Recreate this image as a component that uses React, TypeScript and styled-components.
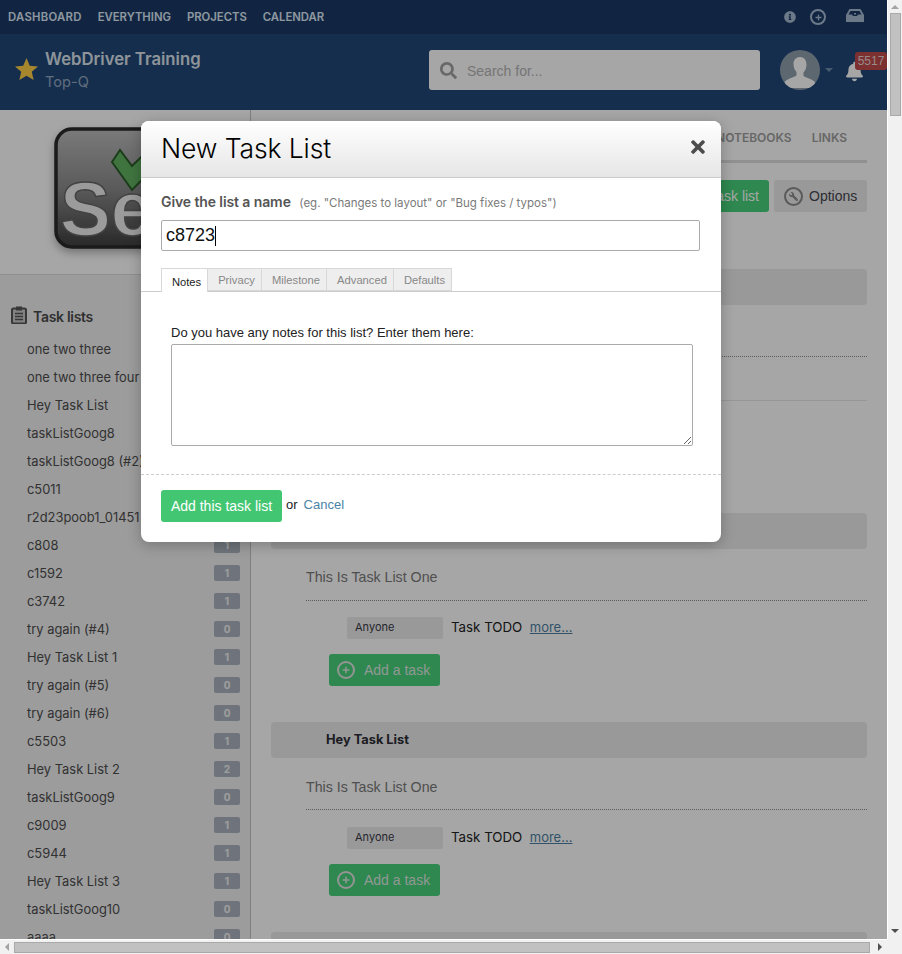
import React from "react";
import styled, { createGlobalStyle } from "styled-components";
import { FaBell, FaInfoCircle, FaSearch, FaTimes, FaWrench, FaPlus } from "react-icons/fa";

const PROXIMA = `"Inter", "Open Sans", sans-serif`;
const ARIAL = `"Liberation Sans", Arial, sans-serif`;

const Global = createGlobalStyle`
  html, body { margin: 0; padding: 0; height: 100%; overflow: hidden; background: #f1f1f1; }
  * { box-sizing: border-box; }
`;

const Viewport = styled.div`
  width: 902px; height: 954px;
  display: grid;
  grid-template-columns: 887px 15px;
  grid-template-rows: 939px 15px;
  overflow: hidden;
`;
const Page = styled.div`
  position: relative;
  overflow: hidden;
  background: #fff;
  font-family: ${PROXIMA};
`;

/* Header */
const TopBar = styled.div`
  height: 34px; background: #1b3a67;
  display: flex; align-items: center; padding: 0 8px;
  gap: 16px;
`;
const NavLink = styled.a`
  font-size: 11.3px; font-weight: 600; color: #dde8f5;
  &:first-child { letter-spacing: 0.3px; }
`;
const NavIcons = styled.div`
  margin-left: auto; display: flex; align-items: center; color: #a6bad2; padding-right: 15px;
`;
const InfoIcon = styled(FaInfoCircle)` width: 12px; height: 12px; margin-right: 14px; `;
const PlusRing = styled.span`
  width: 16px; height: 16px; border: 2px solid #a6bad2; border-radius: 50%;
  display: flex; align-items: center; justify-content: center; margin-right: 20px;
`;
const PlusGlyph = styled(FaPlus)<{ $size: number }>` width: ${p => p.$size}px; height: ${p => p.$size}px; `;
const TrayIcon = styled.svg` width: 18px; height: 13px; margin-top: -3px; `;

const ProjectBar = styled.div`
  height: 76px; background: #214879;
  display: flex; align-items: flex-start; position: relative; padding-top: 16px;
`;
const StarIcon = styled.svg`
  width: 23px; height: 22px; margin: 8px 7px 0 15px; flex: none;
`;
const ProjectNames = styled.div` width: 384px; display: flex; flex-direction: column; margin-top: -2px; `;
const ProjectTitle = styled.div` font-size: 16.7px; font-weight: 600; color: #dbe3ec; line-height: 22px; `;
const ProjectSub = styled.div` font-size: 14.6px; color: #94a8c2; line-height: 22px; margin-top: 1px; `;
const SearchBox = styled.div`
  width: 331px; height: 40px; background: #fff; border-radius: 3px;
  display: flex; align-items: center; padding: 1px 0 0 11px; gap: 10px;
  font-size: 14px; font-family: ${ARIAL}; color: #b5b5b5;
`;
const SearchIcon = styled(FaSearch)` width: 17px; height: 17px; color: #a0a0a0; margin-top: -1px; `;
const Avatar = styled.svg` width: 40px; height: 40px; margin-left: 20px; `;
const Caret = styled.span`
  width: 0; height: 0; margin: 18px 0 0 5px;
  border-left: 4px solid transparent; border-right: 4px solid transparent; border-top: 4px solid #6f8cae;
`;
const BellIcon = styled(FaBell)` width: 17px; height: 23px; color: #fff; position: absolute; left: 846px; top: 26px; `;
const AlertBadge = styled.span`
  position: absolute; left: 855px; top: 18px; width: 32px; height: 18px;
  background: #c04a4a; color: #e8d5d5; border-radius: 3px;
  font: 12px/18px ${ARIAL}; text-align: center;
`;

/* Body */
const Body = styled.div` display: flex; height: 829px; overflow: hidden; `;
const Sidebar = styled.aside`
  width: 251px; flex: none; background: #f0f0f0; border-right: 1px solid #c4c4c4;
  height: 829px; overflow: hidden;
`;
const LogoPanel = styled.div`
  height: 165px; background: #fff; border-bottom: 1px solid #dcdcdc; padding: 16px 0 0 53px;
`;
const ListsHeading = styled.h3`
  display: flex; align-items: center; gap: 6px; margin: 30px 0 8px 11px;
  font-size: 14px; font-weight: 600; color: #4a4a4a; letter-spacing: -0.3px; height: 22px;
`;
const ClipIcon = styled.svg` width: 16px; height: 18px; margin-top: -3px; `;
const ListRow = styled.div`
  height: 28px; display: flex; align-items: center; justify-content: space-between;
  padding: 0 10px 0 27px;
  font-size: 12.9px; color: #4d4d4d;
  white-space: nowrap;
`;
const CountBadge = styled.span`
  width: 26px; height: 16px; border-radius: 2px; background: #abb3bf; color: #f3f3f3;
  font-size: 10px; font-weight: 700; text-align: center; line-height: 16px;
`;

const Main = styled.main` flex: 1; padding: 0 20px; min-width: 0; `;
const Tabs = styled.div`
  height: 53px; border-bottom: 3px solid #ddd;
  display: flex; justify-content: flex-end; align-items: center; padding: 4px 20px 0 0; gap: 20px;
`;
const TabLink = styled.a` font-size: 12px; font-weight: 600; color: #9e9e9e; `;
const Actions = styled.div` display: flex; justify-content: flex-end; gap: 5px; margin-top: 17px; height: 32px; `;
const GreenButton = styled.a`
  height: 32px; background: #47d27a; color: #fff; border-radius: 3px;
  display: inline-flex; align-items: center; font: 14px ${ARIAL};
`;
const NewListButton = styled(GreenButton)` padding: 0 10px; `;
const OptionsButton = styled.a`
  width: 93px; height: 32px; background: #ebebeb; border-radius: 3px;
  display: flex; align-items: center; padding-left: 10px; gap: 6px;
  font: 14px ${ARIAL}; color: #464650;
`;
const WrenchRing = styled.span`
  width: 19px; height: 19px; border: 2.5px solid #8a8a8a; border-radius: 50%;
  display: flex; align-items: center; justify-content: center; color: #8a8a8a;
`;
const WrenchIcon = styled(FaWrench)` width: 9px; height: 9px; transform: scaleX(-1); `;
const Section = styled.section` &:first-of-type { margin-top: 57px; } margin-bottom: 36px; `;
const SectionHead = styled.div`
  height: 36px; background: #ebebeb; border-radius: 4px; padding: 0 0 2px 55px;
  display: flex; align-items: center; font-size: 12.8px; font-weight: 700; color: #2c2c34;
`;
const SectionDesc = styled.div`
  margin-left: 35px; height: 52px; border-bottom: 1px dotted #8c8c8c; padding-top: 18.2px;
  font: 14.2px/20px ${ARIAL}; color: #7a7a7a;
`;
const TaskRow = styled.div<{ $ruled?: boolean }>`
  margin: 16.2px 0 0 76px; height: 22px; display: flex; align-items: center; position: relative;
  ${p => p.$ruled ? `& + & { margin-top: 13px; } & + &::before { content: ""; position: absolute; left: -41px; right: 0; top: -8px; border-top: 1px solid #e6e6e6; }` : ""}
`;
const Assignee = styled.span`
  width: 96px; height: 22px; background: #ebebeb; border-radius: 2px; padding-left: 8px;
  font-size: 11px; line-height: 21px; color: #3a3a48; margin-right: 8px;
`;
const TaskName = styled.span` font-size: 13.3px; font-weight: 400; color: #222; margin: 0 7.5px 2px 0; `;
const MoreLink = styled.a` font-size: 13px; color: #4d7fa3; text-decoration: underline; margin-bottom: 2px; `;
const AddTask = styled(GreenButton)`
  margin: 15px 0 0 58px; width: 111px; padding-left: 8px; gap: 9px; color: #dfe9e2;
`;
const PlusRingLight = styled.span`
  width: 18px; height: 18px; border: 2px solid #e4e4e4; border-radius: 50%;
  display: flex; align-items: center; justify-content: center;
`;

/* Overlay + modal */
const Dim = styled.div` position: absolute; inset: 0; background: rgba(0,0,0,.35); `;
const Modal = styled.div`
  position: absolute; left: 141px; top: 121px; width: 580px; height: 421px;
  background: #fff; border-radius: 8px; overflow: hidden;
  box-shadow: 0 3px 14px rgba(0,0,0,.25);
  font-family: ${ARIAL};
`;
const ModalHead = styled.div`
  height: 57px; background: linear-gradient(#fff, #e6e6e6);
  border-bottom: 1px solid #ccc;
  display: flex; align-items: center; justify-content: space-between; padding: 0 14px 2px 20px;
`;
const ModalTitle = styled.h2` margin: 0; font: 300 26.5px ${PROXIMA}; color: #000; letter-spacing: -0.1px; `;
const CloseIcon = styled(FaTimes)` width: 18px; height: 20px; color: #4c4c4c; margin-top: -2px; `;
const NameField = styled.div` padding: 14px 21px 0 20px; `;
const NameLabel = styled.div` height: 20px; display: flex; align-items: baseline; gap: 8.5px; padding-top: 1px; `;
const NameLabelText = styled.span` font: 600 14px ${PROXIMA}; color: #555; letter-spacing: -0.1px; `;
const NameHint = styled.span` font: 11.5px ${PROXIMA}; color: #7a7a7a; letter-spacing: 0; `;
const NameInput = styled.div`
  margin-top: 8px; height: 31px; border: 1px solid #aaa; border-radius: 2px;
  padding-left: 4px; display: flex; align-items: center;
  font: 18px ${ARIAL}; color: #111;
`;
const TextCaret = styled.span` width: 1px; height: 20px; background: #000; `;
const FormTabs = styled.div`
  margin-top: 17px; height: 24px; padding-left: 20px; display: flex; border-bottom: 1px solid #ccc;
`;
const FormTab = styled.span<{ $w: number; $active?: boolean }>`
  width: ${p => p.$w}px; height: ${p => p.$active ? 24 : 23}px;
  border: 1px solid #d8d8d8; border-left-width: ${p => p.$active ? 1 : 0}px;
  border-bottom-width: ${p => p.$active ? 0 : 1}px;
  background: ${p => p.$active ? "#fff" : "#eee"};
  color: ${p => p.$active ? "#222" : "#888"};
  font-size: 11.2px; text-align: center; line-height: ${p => p.$active ? 26 : 22}px;
  padding-left: 4px;
`;
const NotesPane = styled.div` padding: 33px 28px 0 30px; `;
const NotesLabel = styled.label` display: block; font-size: 13px; line-height: 16px; color: #222; `;
const NotesArea = styled.textarea`
  display: block; width: 522px; height: 102px; margin-top: 3px; border: 1px solid #aaa; border-radius: 2px;
  outline: none; padding: 2px; background: #fff;
`;
const ModalFoot = styled.div`
  margin-top: 28px; border-top: 1px dashed #ccc; padding: 15px 0 0 20px;
  display: flex; align-items: center; font-size: 13px; color: #222;
`;
const SubmitButton = styled.a`
  width: 121px; height: 32px; background: #43c672; color: #fff; border-radius: 3px;
  font-size: 14px; line-height: 32px; text-align: center; margin-right: 4px;
`;
const FootOr = styled.span` margin-top: -4px; margin-right: 6px; `;
const CancelLink = styled.a` margin-top: -4px; color: #4a83a6; `;

/* Scrollbars */
const VBar = styled.div`
  background: #f1f1f1; border-left: 1px solid #fff; position: relative;
  display: flex; flex-direction: column; align-items: center; padding-top: 5px;
`;
const HBar = styled.div`
  background: #f1f1f1; border-top: 1px solid #fff;
  display: flex; align-items: center; padding-left: 5px;
`;
const Corner = styled.div` background: #f1f1f1; `;
const VThumb = styled.div`
  width: 11px; height: 103px; margin-top: 4px; background: #c1c1c1; border: 1px solid #a9a9a9;
`;
const HThumb = styled.div`
  width: 856px; height: 11px; margin-left: 5px; background: #c1c1c1; border: 1px solid #a9a9a9;
`;
const ArrowUp = styled.span` width: 0; height: 0; border: 4px solid transparent; border-top-width: 0; border-bottom: 4px solid #a3a3a3; `;
const ArrowDown = styled.span` position: absolute; left: 3px; bottom: 6px; width: 0; height: 0; border: 4px solid transparent; border-bottom-width: 0; border-top: 4px solid #505050; `;
const ArrowLeft = styled.span` width: 0; height: 0; border: 4px solid transparent; border-left-width: 0; border-right: 4px solid #a3a3a3; `;
const ArrowRight = styled.span` width: 0; height: 0; margin-left: 8px; border: 4px solid transparent; border-right-width: 0; border-left: 4px solid #505050; `;

const LISTS: [string, number | null][] = [
  ["one two three", null], ["one two three four", null], ["Hey Task List", null], ["taskListGoog8", null],
  ["taskListGoog8 (#2)", null], ["c5011", null], ["r2d23poob1_01451", null], ["c808", 1], ["c1592", 1], ["c3742", 1],
  ["try again (#4)", 0], ["Hey Task List 1", 1], ["try again (#5)", 0], ["try again (#6)", 0], ["c5503", 1],
  ["Hey Task List 2", 2], ["taskListGoog9", 0], ["c9009", 1], ["c5944", 1], ["Hey Task List 3", 1],
  ["taskListGoog10", 0], ["aaaa", 0],
];

const SeleniumLogo = () => (
  <svg width="150" height="132" viewBox="0 0 150 132" aria-hidden="true" style={{ overflow: "visible" }}>
    <defs>
      <linearGradient id="lg" x1="0" y1="0" x2="0" y2="1">
        <stop offset="0" stopColor="#bcbcbc" />
        <stop offset="0.5" stopColor="#8c8c8c" />
        <stop offset="1" stopColor="#3f3f3f" />
      </linearGradient>
      <filter id="ls" x="-10%" y="-10%" width="120%" height="125%">
        <feDropShadow dx="0" dy="4" stdDeviation="4" floodColor="#000" floodOpacity="0.3" />
      </filter>
    </defs>
    <rect x="3" y="3" width="144" height="118" rx="16" fill="url(#lg)" stroke="#2a2a2a" strokeWidth="3.5" filter="url(#ls)" />
    <path d="M59 36 L67 24 L79 40 L118 2 L128 14 L79 64 Z" fill="#62b262" stroke="#2b5f2b" strokeWidth="2" />
    <text x="7" y="109" fontFamily="Liberation Sans, sans-serif" fontWeight="700" fontSize="76" fill="#efefef" stroke="#666" strokeWidth="1.5">Se</text>
  </svg>
);

const AvatarArt = () => (
  <Avatar viewBox="0 0 40 40" aria-hidden="true">
    <defs><clipPath id="av"><circle cx="20" cy="20" r="20" /></clipPath></defs>
    <circle cx="20" cy="20" r="20" fill="#909ead" />
    <g clipPath="url(#av)" fill="#fff">
      <path d="M20 7c4 0 6.500 3 6.500 7.500 0 3-1 6-3 8v3.500c3 2.500 11 3 12.500 8V38H4v-4.500c1.500-5 9.500-5.500 12.500-8v-3.500c-2-2-3-5-3-8C13.500 10 16 7 20 7z" />
    </g>
  </Avatar>
);

const TaskSection = ({ title, tasks }: { title: string; tasks: number }) => (
  <Section>
    <SectionHead>{title}</SectionHead>
    <SectionDesc>This Is Task List One</SectionDesc>
    {Array.from({ length: tasks }).map((_, i) => (
      <TaskRow key={i} $ruled={tasks > 1}>
        <Assignee>Anyone</Assignee>
        <TaskName>Task TODO</TaskName>
        <MoreLink>more...</MoreLink>
      </TaskRow>
    ))}
    <AddTask>
      <PlusRingLight><PlusGlyph $size={8} /></PlusRingLight>
      Add a task
    </AddTask>
  </Section>
);

export default function App() {
  return (
    <Viewport>
      <Global />
      <Page>
        <TopBar>
          <NavLink>DASHBOARD</NavLink>
          <NavLink>EVERYTHING</NavLink>
          <NavLink>PROJECTS</NavLink>
          <NavLink>CALENDAR</NavLink>
          <NavIcons>
            <InfoIcon />
            <PlusRing><PlusGlyph $size={7} /></PlusRing>
            <TrayIcon viewBox="0 0 18 13" aria-hidden="true">
              <path d="M3.500 0h11L18 6v7H0V6z" fill="#a6bad2" />
              <path d="M4.500 2h9l2 3.500H12L11 7H7L6 5.500H2.500z" fill="#1b3a67" />
              <rect x="8" y="4" width="2" height="1.500" fill="#a6bad2" />
            </TrayIcon>
          </NavIcons>
        </TopBar>
        <ProjectBar>
          <StarIcon viewBox="0 0 24 23" aria-hidden="true">
            <path d="M12 0L15.400 8 24 8.800 17.500 14.500 19.500 23 12 18.500 4.500 23 6.500 14.500 0 8.800 8.600 8Z" fill="#ffcf48" />
          </StarIcon>
          <ProjectNames>
            <ProjectTitle>WebDriver Training</ProjectTitle>
            <ProjectSub>Top-Q</ProjectSub>
          </ProjectNames>
          <SearchBox><SearchIcon />Search for...</SearchBox>
          <AvatarArt />
          <Caret />
          <BellIcon />
          <AlertBadge>5517</AlertBadge>
        </ProjectBar>
        <Body>
          <Sidebar>
            <LogoPanel><SeleniumLogo /></LogoPanel>
            <ListsHeading>
              <ClipIcon viewBox="0 0 16 18" aria-hidden="true">
                <rect x="1" y="2.500" width="14" height="15" rx="1.500" fill="#c8c8c8" stroke="#555" strokeWidth="2" />
                <rect x="5" y="0.500" width="6" height="4" fill="#555" />
                <path d="M4 7.500h8M4 10.500h8M4 13.500h8" stroke="#555" strokeWidth="1.300" />
              </ClipIcon>
              Task lists
            </ListsHeading>
            {LISTS.map(([name, n]) => (
              <ListRow key={name}>
                {name}
                {n !== null && <CountBadge>{n}</CountBadge>}
              </ListRow>
            ))}
          </Sidebar>
          <Main>
            <Tabs>
              <TabLink>NOTEBOOKS</TabLink>
              <TabLink>LINKS</TabLink>
            </Tabs>
            <Actions>
              <NewListButton>Add task list</NewListButton>
              <OptionsButton><WrenchRing><WrenchIcon /></WrenchRing>Options</OptionsButton>
            </Actions>
            <TaskSection title="Hey Task List" tasks={2} />
            <TaskSection title="Hey Task List" tasks={1} />
            <TaskSection title="Hey Task List" tasks={1} />
            <TaskSection title="Hey Task List" tasks={1} />
          </Main>
        </Body>
        <Dim />
        <Modal>
          <ModalHead>
            <ModalTitle>New Task List</ModalTitle>
            <CloseIcon />
          </ModalHead>
          <NameField>
            <NameLabel>
              <NameLabelText>Give the list a name</NameLabelText>
              <NameHint>(eg. "Changes to layout" or "Bug fixes / typos")</NameHint>
            </NameLabel>
            <NameInput>c8723<TextCaret /></NameInput>
          </NameField>
          <FormTabs>
            <FormTab $w={47} $active>Notes</FormTab>
            <FormTab $w={54}>Privacy</FormTab>
            <FormTab $w={65}>Milestone</FormTab>
            <FormTab $w={67}>Advanced</FormTab>
            <FormTab $w={58}>Defaults</FormTab>
          </FormTabs>
          <NotesPane>
            <NotesLabel>Do you have any notes for this list? Enter them here:</NotesLabel>
            <NotesArea />
          </NotesPane>
          <ModalFoot>
            <SubmitButton>Add this task list</SubmitButton>
            <FootOr>or</FootOr>
            <CancelLink>Cancel</CancelLink>
          </ModalFoot>
        </Modal>
      </Page>
      <VBar>
        <ArrowUp />
        <VThumb />
        <ArrowDown />
      </VBar>
      <HBar>
        <ArrowLeft />
        <HThumb />
        <ArrowRight />
      </HBar>
      <Corner />
    </Viewport>
  );
}
